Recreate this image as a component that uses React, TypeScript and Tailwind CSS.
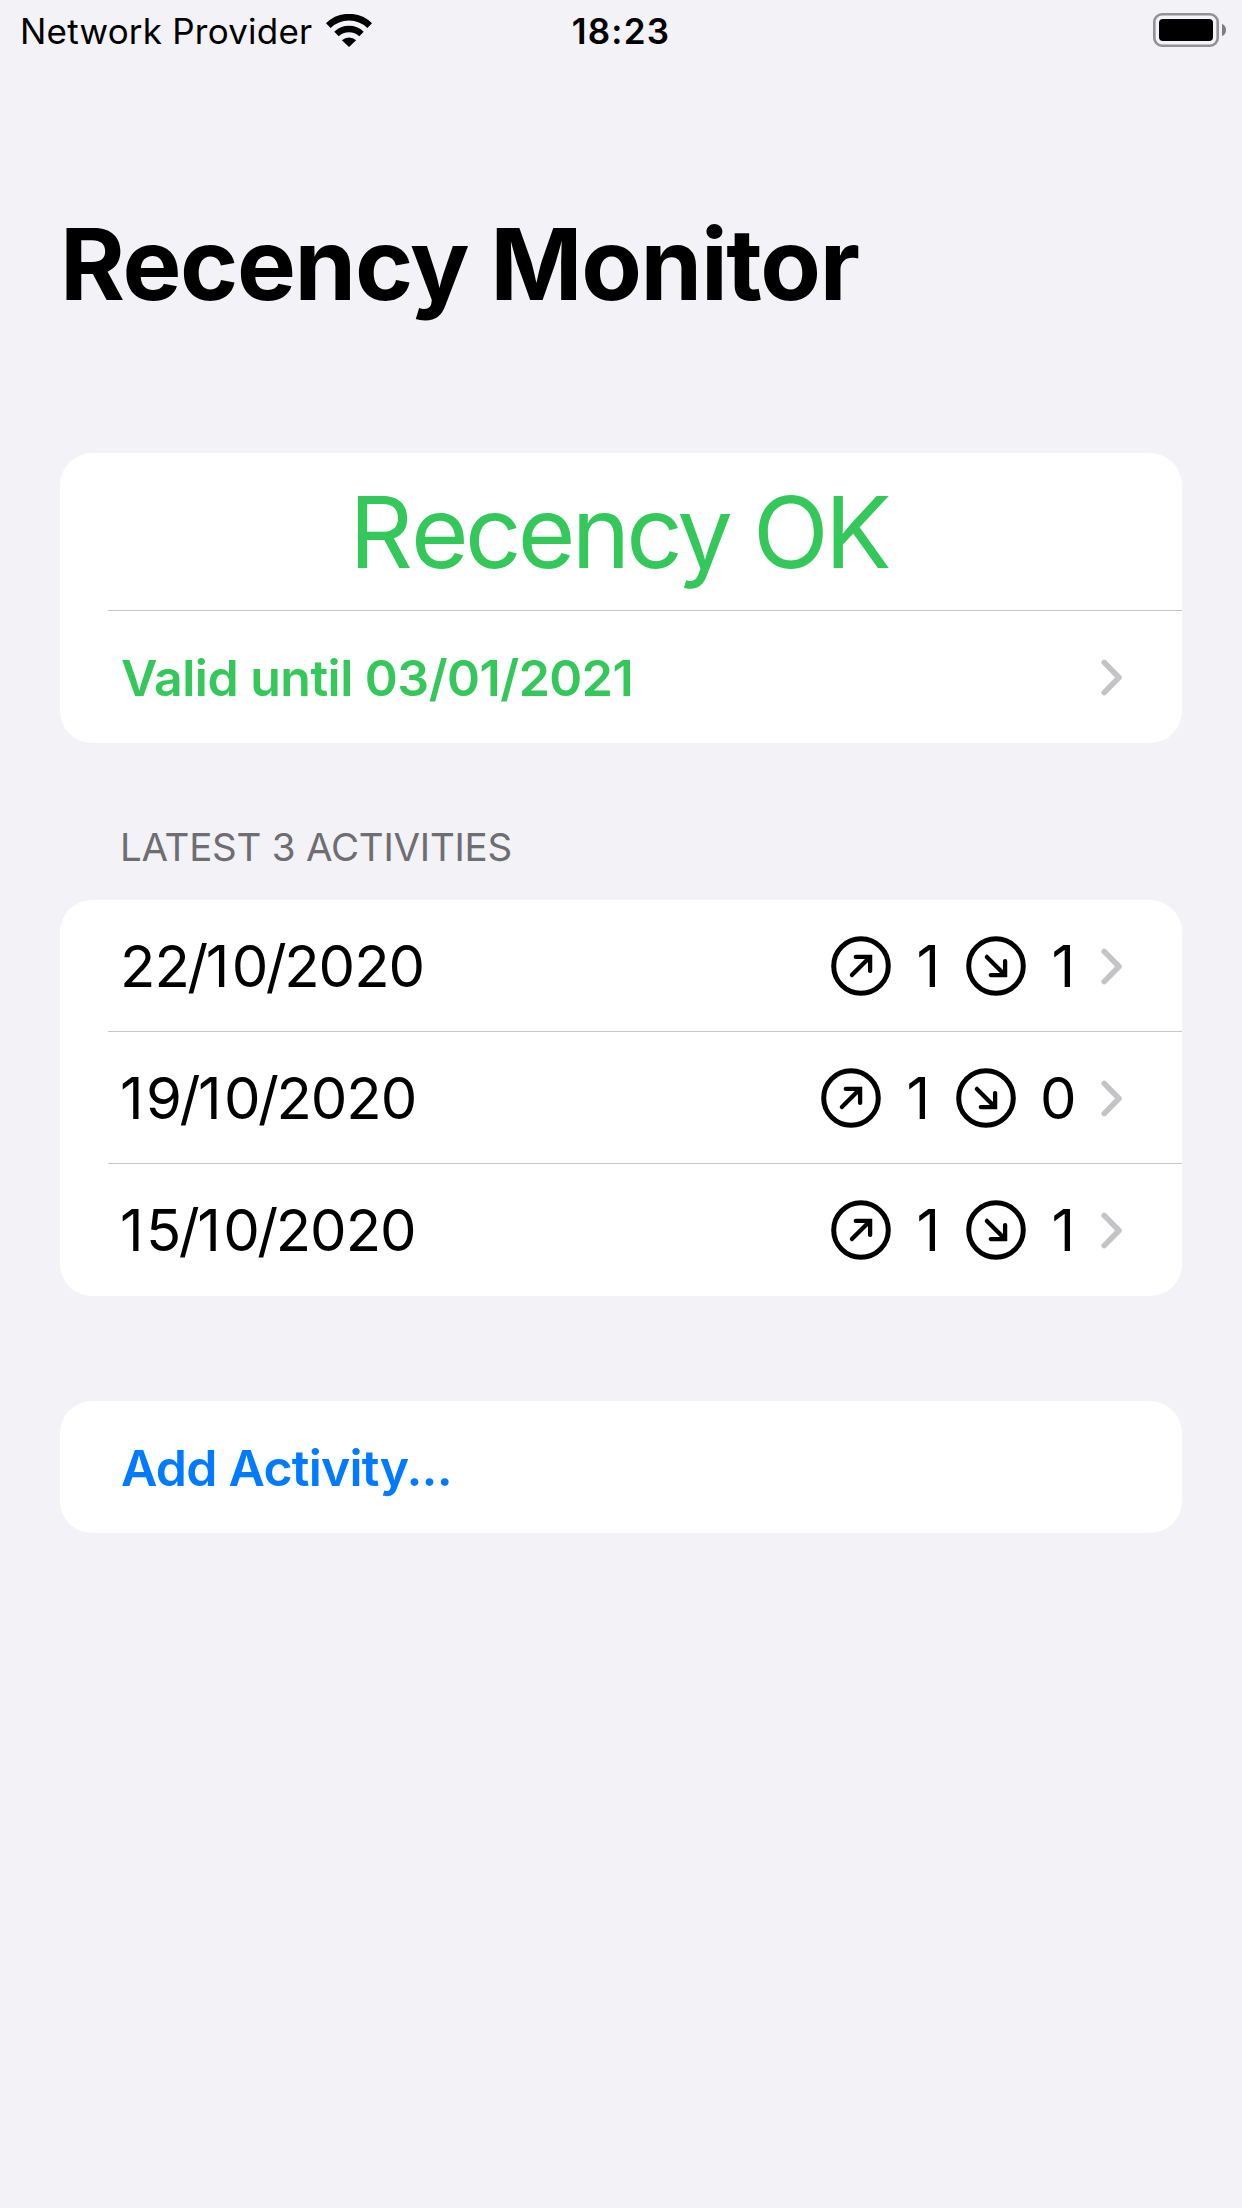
import type { ReactNode } from "react";

type Direction = "up" | "down";

interface Activity {
  date: string;
  takeoffs: number;
  landings: number;
}

const ACTIVITIES: Activity[] = [
  { date: "22/10/2020", takeoffs: 1, landings: 1 },
  { date: "19/10/2020", takeoffs: 1, landings: 0 },
  { date: "15/10/2020", takeoffs: 1, landings: 1 },
];

function Wifi() {
  return (
    <svg className="h-[33px] w-[46px]" viewBox="0 0 46 33" fill="none" stroke="#000">
      <path d="M2.3 11.6A29.5 29.5 0 0 1 43.7 11.6" strokeWidth="6.6" />
      <path d="M10.5 20A18.2 18.2 0 0 1 35.5 20" strokeWidth="6.4" />
      <path d="M23 33L15.9 26.2A10.4 10.4 0 0 1 30.1 26.2Z" fill="#000" stroke="none" />
    </svg>
  );
}

function Battery() {
  return (
    <svg className="h-[34px] w-[73px]" viewBox="0 0 73 34">
      <rect x="1.3" y="1.3" width="63.4" height="31.4" rx="7.7" fill="none" stroke="#929296" strokeWidth="2.6" />
      <rect x="6" y="6" width="54" height="22" rx="4" fill="#000" />
      <path d="M69 10.8Q73 12.8 73 17T69 23.2Z" fill="#7d7d80" />
    </svg>
  );
}

function Chevron() {
  return (
    <svg
      className="h-[37px] w-[22px] shrink-0"
      viewBox="0 0 22 37"
      fill="none"
      stroke="#c4c4c7"
      strokeWidth="5.6"
      strokeLinecap="round"
      strokeLinejoin="round"
    >
      <path d="M3.2 3.4L18 18.5L3.2 33.6" />
    </svg>
  );
}

function ArrowCircle({ direction }: { direction: Direction }) {
  return (
    <svg
      className="h-[60px] w-[60px] shrink-0"
      viewBox="0 0 60 60"
      fill="none"
      stroke="#000"
      strokeWidth="4.3"
      strokeLinecap="round"
    >
      <circle cx="30" cy="30" r="27.3" strokeWidth="5" />
      {direction === "up" ? (
        <path d="M20.9 39.1L38.5 21.5M24.8 20.9H39.1V34.9" />
      ) : (
        <path d="M20.9 20.9L38.5 38.5M39.1 25.1V39.1H24.8" />
      )}
    </svg>
  );
}

function Count({ value }: { value: number }) {
  return value === 1 ? (
    <span className="w-[27px] pl-[1.5px]">1</span>
  ) : (
    <span className="w-[37px]">{value}</span>
  );
}

// Spacing after each character: loose after a "1", tight around the slashes.
function trackingFor(char: string, next: string | undefined) {
  if (char === "1") return "tracking-[2.4px]";
  if (char === "/" || next === "/") return "tracking-[-2.5px]";
  return "tracking-[-1px]";
}

function ActivityDate({ value }: { value: string }) {
  return (
    <span className="[font-kerning:none]">
      {[...value].map((char, i) => (
        <span key={i} className={trackingFor(char, value[i + 1])}>
          {char}
        </span>
      ))}
    </span>
  );
}

function Card({ children }: { children: ReactNode }) {
  return <section className="mx-[60px] overflow-hidden rounded-[32px] bg-white">{children}</section>;
}

function Divider() {
  return <div className="ml-12 h-px bg-[#c6c6c8]" />;
}

export default function App() {
  return (
    <main className="flex min-h-[2208px] w-full flex-col bg-[#f2f2f7] font-['Inter',sans-serif] whitespace-nowrap text-black">
      <header className="grid h-[60px] grid-cols-3 items-center pr-4 pl-5 text-[35px] leading-[57px]">
        <div className="flex items-center">
          <span className="pt-[3px] tracking-[0.22px]">Network Provider</span>
          <span className="ml-[14px]">
            <Wifi />
          </span>
        </div>
        <span className="pt-[3px] pr-[4px] text-center font-semibold tracking-[1.2px]">18:23</span>
        <div className="flex justify-end">
          <Battery />
        </div>
      </header>

      <h1 className="mt-36 ml-[60px] text-[99px] leading-[120px] font-bold tracking-[-1.35px]">Recency Monitor</h1>

      <div className="mt-[129px]">
        <Card>
          <p className="h-[157px] pr-[5px] text-center text-[99px] leading-[158px] tracking-[-3.8px] text-[#34c759]">
            <span className="tracking-[-2px]">R</span>ecency OK
          </p>
          <Divider />
          <div className="flex h-[132px] items-center justify-between pr-[59px] pl-[61px]">
            <span className="pt-0.5 text-[50px] font-semibold tracking-[-0.5px] text-[#34c759]">
              Valid until 03/01/2021
            </span>
            <Chevron />
          </div>
        </Card>
      </div>

      <h2 className="mt-[72px] ml-[120px] h-[85px] text-[38.5px] leading-[64px] tracking-[-0.24px] text-[#6d6d72]">
        LATEST 3 ACTIVITIES
      </h2>

      <Card>
        {ACTIVITIES.map((activity, index) => (
          <div key={activity.date} className="h-[132px]">
            <div className="flex h-[131px] items-center justify-between pt-px pr-[59px] pl-[60px] text-[58px]">
              <ActivityDate value={activity.date} />
              <div className="flex items-center gap-6">
                <ArrowCircle direction="up" />
                <Count value={activity.takeoffs} />
                <ArrowCircle direction="down" />
                <Count value={activity.landings} />
                <Chevron />
              </div>
            </div>
            {index < ACTIVITIES.length - 1 && <Divider />}
          </div>
        ))}
      </Card>

      <div className="mt-[105px]">
        <Card>
          <button className="flex h-[132px] w-full items-center pt-0.5 pl-[61px] text-[50px] font-semibold tracking-[-0.77px] text-[#007aff]">
            Add Activity...
          </button>
        </Card>
      </div>
    </main>
  );
}
